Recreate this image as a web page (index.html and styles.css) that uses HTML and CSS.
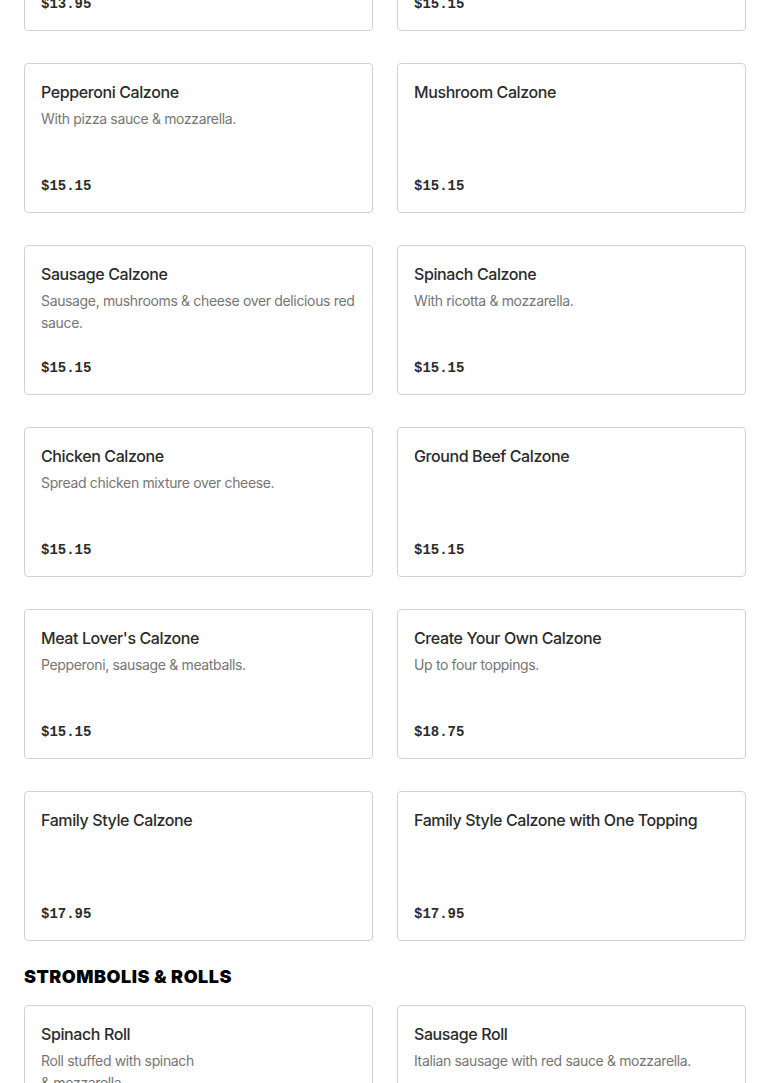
FILE: index.html
```html
<html>

<head>

<title>Calzones</title>

<link rel="stylesheet" href="styles.css">

</head>

<body>

<div class="menu">

<div class="items scrolled">

  <div class="item">
    <div class="name">Cheese Calzone</div>
    <div class="desc">With ricotta &amp; mozzarella.</div>
    <div class="price">$13.95</div>
  </div>

  <div class="item">
    <div class="name">Broccoli Calzone</div>
    <div class="desc"></div>
    <div class="price">$15.15</div>
  </div>

  <div class="item">
    <div class="name">Pepperoni Calzone</div>
    <div class="desc">With pizza sauce &amp; mozzarella.</div>
    <div class="price">$15.15</div>
  </div>

  <div class="item">
    <div class="name">Mushroom Calzone</div>
    <div class="desc"></div>
    <div class="price">$15.15</div>
  </div>

  <div class="item">
    <div class="name">Sausage Calzone</div>
    <div class="desc">Sausage, mushrooms &amp; cheese over delicious red sauce.</div>
    <div class="price">$15.15</div>
  </div>

  <div class="item">
    <div class="name">Spinach Calzone</div>
    <div class="desc">With ricotta &amp; mozzarella.</div>
    <div class="price">$15.15</div>
  </div>

  <div class="item">
    <div class="name">Chicken Calzone</div>
    <div class="desc">Spread chicken mixture over cheese.</div>
    <div class="price">$15.15</div>
  </div>

  <div class="item">
    <div class="name">Ground Beef Calzone</div>
    <div class="desc"></div>
    <div class="price">$15.15</div>
  </div>

  <div class="item">
    <div class="name">Meat Lover's Calzone</div>
    <div class="desc">Pepperoni, sausage &amp; meatballs.</div>
    <div class="price">$15.15</div>
  </div>

  <div class="item">
    <div class="name">Create Your Own Calzone</div>
    <div class="desc">Up to four toppings.</div>
    <div class="price">$18.75</div>
  </div>

  <div class="item">
    <div class="name">Family Style Calzone</div>
    <div class="desc"></div>
    <div class="price">$17.95</div>
  </div>

  <div class="item">
    <div class="name">Family Style Calzone with One Topping</div>
    <div class="desc"></div>
    <div class="price">$17.95</div>
  </div>

</div>

<h2>Strombolis &amp; Rolls</h2>

<div class="items">

  <div class="item">
    <div class="name">Spinach Roll</div>
    <div class="desc">Roll stuffed with spinach<br/>&amp; mozzarella.</div>
    <div class="price">$9.95</div>
  </div>

  <div class="item">
    <div class="name">Sausage Roll</div>
    <div class="desc">Italian sausage with red sauce &amp; mozzarella.</div>
    <div class="price">$9.95</div>
  </div>

</div>

</div>

</body>

</html>
```

FILE: styles.css
```css
body {
   margin: 0;
   background: #fff;
   font-family: Inter, "Noto Sans", sans-serif;
   color: #2b2b2b; }

.menu {
   padding: 0 24px; }

.items {
   display: grid;
   grid-template-columns: 1fr 1fr;
   column-gap: 24px;
   row-gap: 32px; }

/* page is scrolled: first row shows only its bottom */
.scrolled {
   margin-top: -119px; }

.item {
   height: 150px;
   box-sizing: border-box;
   border: 1px solid #d2d2d2;
   border-radius: 4px;
   padding: 16px;
   display: flex;
   flex-direction: column; }

.name {
   font-size: 16px;
   line-height: 24px;
   font-weight: 500;
   letter-spacing: -0.4px; }

.desc {
   margin-top: 4px;
   margin-right: -4px;
   font-size: 14px;
   line-height: 22px;
   color: #767676;
   letter-spacing: -0.35px;
   flex: 1; }

.price {
   font-family: "Liberation Mono", "DejaVu Sans Mono", monospace;
   font-weight: bold;
   font-size: 14px;
   line-height: 20px; }

h2 {
   margin: 24px 0 16px;
   font-size: 18px;
   line-height: 24px;
   font-weight: 900;
   text-transform: uppercase;
   color: #000;
   letter-spacing: 0.5px; }
```
